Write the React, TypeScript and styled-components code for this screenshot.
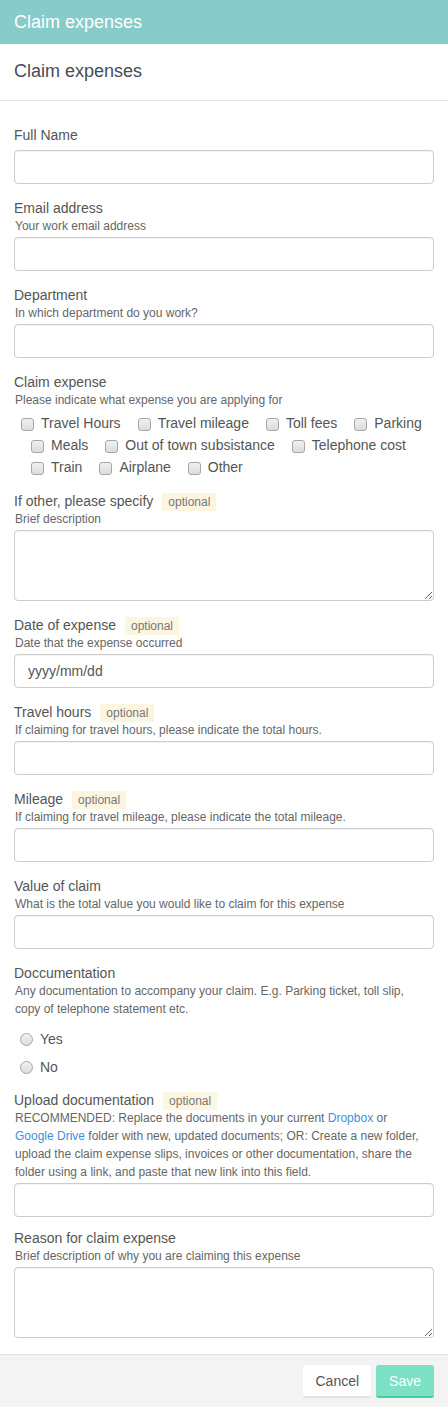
import React from "react";
import styled, { createGlobalStyle } from "styled-components";

const Global = createGlobalStyle`
  html, body { margin: 0; padding: 0; background: #ffffff; }
  body { font-family: "Liberation Sans", Arial, sans-serif; color: #555; }
  * { box-sizing: border-box; }
`;

const Page = styled.div`
  width: 448px;
  background: #fff;
`;

const TopBar = styled.header`
  height: 44px;
  background: #87cbca;
  display: flex;
  align-items: center;
  padding: 0 14px;
  color: #fff;
  font-size: 18px;
`;

const SubHeader = styled.div`
  height: 57px;
  display: flex;
  align-items: center;
  padding: 0 14px 1px;
  font-size: 18px;
  color: #444d57;
  border-bottom: 1px solid #e6e6e6;
`;

const Form = styled.form`
  padding: 24px 14px 2px;
`;

const Group = styled.div<{ $mb?: number }>`
  margin-bottom: ${(p) => (p.$mb ?? 14)}px;
`;

const Label = styled.div<{ $solo?: boolean }>`
  font-size: 14px;
  line-height: 20px;
  color: #555;
  margin-bottom: ${(p) => (p.$solo ? 5 : 0)}px;
  display: flex;
  align-items: center;
`;

const Badge = styled.span`
  margin-left: 9px;
  margin-top: 2px;
  background: #fcf6e1;
  color: #777;
  font-size: 12px;
  line-height: 18px;
  padding: 0 6px;
`;

const Help = styled.div`
  font-size: 12px;
  line-height: 18px;
  color: #666;
  margin-top: -1px;
  margin-bottom: 2px;
  padding: 0 7px 0 1px;
`;

const Link = styled.a`
  color: #3b8fdc;
  text-decoration: none;
`;

const TextInput = styled.input`
  display: block;
  width: 100%;
  height: 34px;
  border: 1px solid #cccccc;
  border-radius: 4px;
  padding: 0 12px 0 13px;
  font-family: "Liberation Sans", Arial, sans-serif;
  font-size: 14px;
  color: #555;
  box-shadow: inset 0 1px 1px rgba(0, 0, 0, 0.05);
  outline: none;
  &::placeholder { color: #555; }
`;

const TextArea = styled.textarea`
  display: block;
  width: 100%;
  height: 71px;
  border: 1px solid #cccccc;
  border-radius: 4px;
  padding: 6px 12px;
  font-family: "Liberation Sans", Arial, sans-serif;
  font-size: 14px;
  color: #555;
  box-shadow: inset 0 1px 1px rgba(0, 0, 0, 0.05);
  outline: none;
`;

const CheckWrap = styled.div`
  display: flex;
  flex-wrap: wrap;
  margin-top: 3px;
`;

const CheckItem = styled.label<{ $first?: boolean }>`
  display: inline-flex;
  align-items: center;
  height: 22px;
  margin-left: ${(p) => (p.$first ? 7 : 17)}px;
  font-size: 14px;
  color: #555;
`;

const CheckBox = styled.input`
  appearance: none;
  -webkit-appearance: none;
  width: 13px;
  height: 13px;
  margin: 2px 7px 0 0;
  border: 1px solid #a6a6a6;
  border-radius: 3px;
  background: linear-gradient(#f0f0f0, #dcdcdc);
  flex: none;
`;

const RadioList = styled.div`
  display: flex;
  flex-direction: column;
  margin-top: 7px;
`;

const RadioItem = styled.label`
  display: flex;
  align-items: center;
  height: 28px;
  padding-left: 6px;
  font-size: 14px;
  color: #555;
`;

const Radio = styled.input`
  appearance: none;
  -webkit-appearance: none;
  width: 13px;
  height: 13px;
  margin: 1px 7px 0 0;
  border: 1px solid #a6a6a6;
  border-radius: 50%;
  background: linear-gradient(#f2f2f2, #dcdcdc);
  flex: none;
`;

const Footer = styled.div`
  height: 54px;
  background: #f3f3f3;
  border-top: 1px solid #e2e2e2;
  display: flex;
  justify-content: flex-end;
  align-items: flex-start;
  gap: 5px;
  padding: 10px 14px 0;
`;

const Button = styled.button<{ $primary?: boolean }>`
  height: 33px;
  padding: 0 ${(p) => (p.$primary ? 13 : 12)}px;
  border: none;
  border-bottom: 2px solid ${(p) => (p.$primary ? "#3fcf9f" : "#e2e2e2")};
  border-radius: 3px;
  background: ${(p) => (p.$primary ? "#7ddfc3" : "#ffffff")};
  color: ${(p) => (p.$primary ? "#ffffff" : "#555")};
  font-family: "Liberation Sans", Arial, sans-serif;
  font-size: 14px;
`;

const expenses = [
  "Travel Hours",
  "Travel mileage",
  "Toll fees",
  "Parking",
  "Meals",
  "Out of town subsistance",
  "Telephone cost",
  "Train",
  "Airplane",
  "Other",
];

function Field({
  label,
  help,
  optional,
  children,
  mb,
}: {
  label: string;
  help?: React.ReactNode;
  optional?: boolean;
  children: React.ReactNode;
  mb?: number;
}) {
  return (
    <Group $mb={mb}>
      <Label $solo={!help}>
        {label}
        {optional && <Badge>optional</Badge>}
      </Label>
      {help && <Help>{help}</Help>}
      {children}
    </Group>
  );
}

export default function App() {
  return (
    <Page>
      <Global />
      <TopBar>Claim expenses</TopBar>
      <SubHeader>Claim expenses</SubHeader>
      <Form onSubmit={(e) => e.preventDefault()}>
        <Field label="Full Name">
          <TextInput type="text" />
        </Field>
        <Field label="Email address" help="Your work email address">
          <TextInput type="text" />
        </Field>
        <Field label="Department" help="In which department do you work?">
          <TextInput type="text" />
        </Field>
        <Field
          label="Claim expense"
          help="Please indicate what expense you are applying for"
          mb={13}
        >
          <CheckWrap>
            {expenses.map((e, i) => (
              <CheckItem key={e} $first={i === 0}>
                <CheckBox type="checkbox" />
                {e}
              </CheckItem>
            ))}
          </CheckWrap>
        </Field>
        <Field label="If other, please specify" optional help="Brief description">
          <TextArea />
        </Field>
        <Field label="Date of expense" optional help="Date that the expense occurred">
          <TextInput type="text" placeholder="yyyy/mm/dd" />
        </Field>
        <Field
          label="Travel hours"
          optional
          help="If claiming for travel hours, please indicate the total hours."
        >
          <TextInput type="text" />
        </Field>
        <Field
          label="Mileage"
          optional
          help="If claiming for travel mileage, please indicate the total mileage."
        >
          <TextInput type="text" />
        </Field>
        <Field
          label="Value of claim"
          help="What is the total value you would like to claim for this expense"
        >
          <TextInput type="text" />
        </Field>
        <Field
          label="Doccumentation"
          help="Any documentation to accompany your claim. E.g. Parking ticket, toll slip, copy of telephone statement etc."
          mb={9}
        >
          <RadioList>
            <RadioItem>
              <Radio type="radio" name="doc" />
              Yes
            </RadioItem>
            <RadioItem>
              <Radio type="radio" name="doc" />
              No
            </RadioItem>
          </RadioList>
        </Field>
        <Field
          label="Upload documentation"
          optional
          mb={11}
          help={
            <>
              RECOMMENDED: Replace the documents in your current <Link href="#">Dropbox</Link> or{" "}
              <Link href="#">Google Drive</Link> folder with new, updated documents; OR: Create a new
              folder, upload the claim expense slips, invoices or other documentation, share the
              folder using a link, and paste that new link into this field.
            </>
          }
        >
          <TextInput type="text" />
        </Field>
        <Field
          label="Reason for claim expense"
          help="Brief description of why you are claiming this expense"
        >
          <TextArea />
        </Field>
      </Form>
      <Footer>
        <Button type="button">Cancel</Button>
        <Button type="button" $primary>
          Save
        </Button>
      </Footer>
    </Page>
  );
}
